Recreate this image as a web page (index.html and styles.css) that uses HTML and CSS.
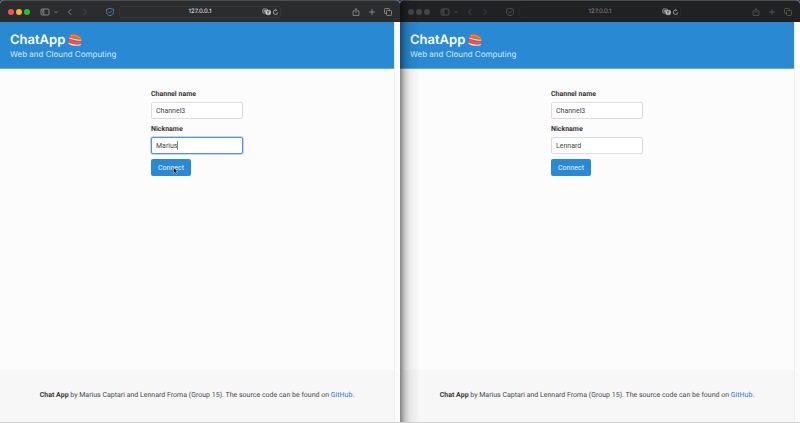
FILE: index.html
```html
<!DOCTYPE html>
<html lang="en">
<head>
<meta charset="utf-8">
<title>ChatApp</title>
<link rel="stylesheet" href="styles.css">
</head>
<body>
<svg class="sprite" aria-hidden="true">
  <symbol id="sidebar" viewBox="0 0 10 8"><rect x="1" y="1" width="8" height="6" rx="1"/><path d="M3.8 1v6M1.9 2.5h1M1.9 3.7h1M1.9 4.9h1"/></symbol>
  <symbol id="down" viewBox="0 0 4 8"><path d="M.5 3.4 2 4.8l1.5-1.4"/></symbol>
  <symbol id="back" viewBox="0 0 6 8"><path d="M4.2 1.2 1.5 4l2.7 2.8"/></symbol>
  <symbol id="forward" viewBox="0 0 6 8"><path d="M1.8 1.2 4.5 4 1.8 6.8"/></symbol>
  <symbol id="shield" viewBox="0 0 8 8"><path d="M4 .4 7.6 1.4v2.7C7.6 6 5.8 7.1 4 7.7 2.2 7.1.4 6 .4 4.1V1.4zM2.4 3.8l1.2 1.2 2.1-2.3"/></symbol>
  <symbol id="translate" viewBox="0 0 9 8"><rect x=".8" y="1" width="4.6" height="4" rx=".8"/><path d="M2 3.8 3.1 2l1 1.8M2.4 3.2h1.4"/><rect class="solid" x="4" y="2.4" width="4.4" height="4.2" rx=".8"/><path class="glyph" d="M5 3.6h2.4M6.2 3v.6M7 3.7C6.8 4.8 6 5.2 5.2 5.5M5.4 4.2c.5.8 1 1.1 1.8 1.3"/></symbol>
  <symbol id="reload" viewBox="0 0 7 8"><path d="M5.7 4.3A2.2 2.2 0 1 1 3.8 2.1M3.4 1l1.3 1.1-1.2 1.2"/></symbol>
  <symbol id="share" viewBox="0 0 8 8"><path d="M2.8 2.8H1.1v4.6h5.8V2.8H5.2M4 5V.6M2.6 1.9 4 .6l1.4 1.3"/></symbol>
  <symbol id="plus" viewBox="0 0 8 8"><path d="M4 1v6M1 4h6"/></symbol>
  <symbol id="tabs" viewBox="0 0 8 8"><rect x="2.5" y="2.5" width="5" height="5" rx=".8"/><path d="M2.3 5.5h-1a.8.8 0 0 1-.8-.8V1.3A.8.8 0 0 1 1.3.5h3.4a.8.8 0 0 1 .8.8v1"/></symbol>
  <symbol id="food" viewBox="0 0 14 12">
    <path fill="#eedfd8" d="M.2 8.6C4 10.2 9 11 13.2 10l-.9 1.5C8.5 12.2 3.5 11.8.7 10z"/>
    <path fill="#f04540" d="M.9 5.6C2 4.8 3.4 5.1 4.7 5.8 7.5 7.2 10.5 7.4 13.8 6.9L13 10C9.5 10.8 4.3 10.2.1 8.6z"/>
    <path fill="none" stroke="#ff8574" stroke-width=".4" d="M1.4 7c3.7 1.8 7.8 2 11.6 1.2"/>
    <path fill="#ecd5ca" d="M1.2 3.6C5 4.1 8.5 5.8 13 5.3l.6 1.3C9.5 7.3 5 6 1 4.5z"/>
    <path fill="#e96831" d="M2.5.6C5.8-.1 10.8.6 12.9 3.6l.2 1.8C8.8 5.9 5.1 3.9 1.2 3.7z"/>
    <path fill="none" stroke="#ffa566" stroke-width=".5" d="M2.8 1.6c3-.4 6 .4 9.2 2.1"/>
  </symbol>
</svg>

<section class="window" aria-label="Marius">
  <div class="toolbar">
    <div class="tools">
      <div class="lights"><i class="close"></i><i class="minimize"></i><i class="expand"></i></div>
      <div class="panel">
        <button aria-label="Sidebar"><svg class="w10"><use href="#sidebar"/></svg></button>
        <button aria-label="Tab groups"><svg class="w4"><use href="#down"/></svg></button>
      </div>
      <div class="history">
        <button aria-label="Back"><svg class="w6"><use href="#back"/></svg></button>
        <button class="disabled" aria-label="Forward"><svg class="w6"><use href="#forward"/></svg></button>
      </div>
      <button class="shield" aria-label="Privacy"><svg class="w8"><use href="#shield"/></svg></button>
    </div>
    <div class="address">
      <span class="host">127.0.0.1</span>
      <button class="lit" aria-label="Translate"><svg class="w9"><use href="#translate"/></svg></button>
      <button class="lit" aria-label="Reload"><svg class="w7"><use href="#reload"/></svg></button>
    </div>
    <div class="actions">
      <button aria-label="Share"><svg class="w8"><use href="#share"/></svg></button>
      <button aria-label="New tab"><svg class="w8"><use href="#plus"/></svg></button>
      <button aria-label="Tab overview"><svg class="w8"><use href="#tabs"/></svg></button>
    </div>
  </div>
  <div class="page">
    <header class="hero">
      <h1>ChatApp <svg class="food" aria-hidden="true"><use href="#food"/></svg></h1>
      <p>Web and Clound Computing</p>
    </header>
    <main>
      <form>
        <label for="channel-1">Channel name</label>
        <div class="control"><input id="channel-1" type="text" value="Channel3"></div>
        <label for="nick-1">Nickname</label>
        <div class="control"><input id="nick-1" class="focused" type="text" value="Marius"><span class="caret"></span></div>
        <button class="connect" type="button">Connect</button>
        <svg class="pointer" viewBox="0 0 6 8" aria-hidden="true"><path d="M.5.4v5.8l1.4-1.2 1 2.4 1.2-.5-1-2.3h1.8z"/></svg>
      </form>
    </main>
    <footer><p><strong>Chat App</strong> by Marius Captari and Lennard Froma (Group 15). The source code can be found on <a href="#">GitHub</a>.</p></footer>
  </div>
</section>

<section class="window inactive" aria-label="Lennard">
  <div class="toolbar">
    <div class="tools">
      <div class="lights"><i class="close"></i><i class="minimize"></i><i class="expand"></i></div>
      <div class="panel">
        <button aria-label="Sidebar"><svg class="w10"><use href="#sidebar"/></svg></button>
        <button aria-label="Tab groups"><svg class="w4"><use href="#down"/></svg></button>
      </div>
      <div class="history">
        <button aria-label="Back"><svg class="w6"><use href="#back"/></svg></button>
        <button class="disabled" aria-label="Forward"><svg class="w6"><use href="#forward"/></svg></button>
      </div>
      <button class="shield" aria-label="Privacy"><svg class="w8"><use href="#shield"/></svg></button>
    </div>
    <div class="address">
      <span class="host">127.0.0.1</span>
      <button class="lit" aria-label="Translate"><svg class="w9"><use href="#translate"/></svg></button>
      <button class="lit" aria-label="Reload"><svg class="w7"><use href="#reload"/></svg></button>
    </div>
    <div class="actions">
      <button aria-label="Share"><svg class="w8"><use href="#share"/></svg></button>
      <button aria-label="New tab"><svg class="w8"><use href="#plus"/></svg></button>
      <button aria-label="Tab overview"><svg class="w8"><use href="#tabs"/></svg></button>
    </div>
  </div>
  <div class="page">
    <header class="hero">
      <h1>ChatApp <svg class="food" aria-hidden="true"><use href="#food"/></svg></h1>
      <p>Web and Clound Computing</p>
    </header>
    <main>
      <form>
        <label for="channel-2">Channel name</label>
        <div class="control"><input id="channel-2" type="text" value="Channel3"></div>
        <label for="nick-2">Nickname</label>
        <div class="control"><input id="nick-2" type="text" value="Lennard"></div>
        <button class="connect" type="button">Connect</button>
      </form>
    </main>
    <footer><p><strong>Chat App</strong> by Marius Captari and Lennard Froma (Group 15). The source code can be found on <a href="#">GitHub</a>.</p></footer>
  </div>
</section>
</body>
</html>
```

FILE: styles.css
```css
* { box-sizing: border-box; }

body {
  display: grid;
  grid-template-columns: 1fr 1fr;
  min-height: 100vh;
  margin: 0;
  background: #173153;
  color: #4a4a4a;
  font: 7px/10px Roboto, "Liberation Sans", sans-serif;
  text-rendering: geometricPrecision;
}

h1, p { margin: 0; }
button { margin: 0; padding: 0; border: 0; background: none; color: inherit; font: inherit; }
.sprite { position: absolute; width: 0; height: 0; }

.window {
  position: relative;
  display: flex;
  flex-direction: column;
  border-radius: 4px 4px 0 0;
  border-bottom: 1px solid #d0d0d0;
  background: #fcfcfc;
  overflow: hidden;
}

.toolbar {
  display: grid;
  grid-template-columns: 1fr 162px 1fr;
  align-items: center;
  height: 22px;
  border-top: 1px solid #4b4d4e;
  border-radius: 4px 4px 0 0;
  background: #2b2c2e;
  color: #a5a6a7;
}
.toolbar svg { display: block; height: 8px; fill: none; stroke: currentColor; stroke-width: .7; }
.w4 { width: 4px; }
.w6 { width: 6px; }
.w7 { width: 7px; }
.w8 { width: 8px; }
.w9 { width: 9px; }
.w10 { width: 10px; }
.solid { fill: currentColor; }
.glyph { stroke: #2b2c2e; stroke-width: .5; }

.tools, .lights, .panel, .history, .actions, .address { display: flex; align-items: center; }
.tools { justify-content: space-between; padding: 0 5px 0 8px; }
.lights { gap: 2px; }
.lights i { width: 6px; height: 6px; border-radius: 50%; }
.close { background: #f4534e; }
.minimize { background: #f6b52e; }
.expand { background: #27c138; }
.panel { gap: 4px; }
.history { gap: 9px; }
.disabled { color: #55575a; }
.shield { margin-left: 8px; color: #4aa3e0; }
.address {
  position: relative;
  justify-content: flex-end;
  gap: 1px;
  height: 12px;
  padding-right: 1px;
  border: 1px solid #343638;
  border-radius: 3px;
}
.host { position: absolute; inset: 0; color: #f0f0f0; font-family: Inter, sans-serif; font-size: 6px; text-align: center; }
.lit { color: #d0d0d0; }
.actions { justify-content: flex-end; gap: 8px; padding-right: 8px; }

.page {
  display: flex;
  flex: 1;
  flex-direction: column;
  margin-right: 6px;
  box-shadow: 1px 0 #ededed;
}
.hero { padding: 10px 10px 8px; border-bottom: 1px solid #63acdf; background: #2989d3; color: #d5e8f6; font-family: Inter, "Liberation Sans", sans-serif; }
.hero h1 { display: flex; align-items: center; gap: 3px; color: #fff; font-size: 13px; font-weight: 600; line-height: 16px; }
.hero p { font-size: 8px; line-height: 12px; }
.food { width: 14px; height: 12px; }

main { flex: 1; padding-top: 20px; }
form { position: relative; display: flex; flex-direction: column; align-items: flex-start; width: 92px; margin: 0 auto; }
label { margin-bottom: 3px; color: #363636; font-weight: 700; }
strong { color: #363636; }
.control { position: relative; width: 100%; margin-bottom: 5px; }
input {
  display: block;
  width: 100%;
  height: 17px;
  padding: 0 4px;
  border: 1px solid #dbdbdb;
  border-radius: 2px;
  background: #fff;
  color: #444;
  font: inherit;
}
.focused { border-color: #5c8ede; box-shadow: 0 0 0 1px #c3d5f4; }
.caret { position: absolute; top: 4px; left: 26px; width: 1px; height: 9px; background: #888; }
.connect { height: 17px; padding: 0 7px; border-radius: 2px; background: #2989d3; color: #e8f4fc; }
.pointer { position: absolute; bottom: 1px; left: 22px; width: 6px; height: 8px; fill: #111; stroke: #fff; stroke-width: .4; }

footer { padding: 20px 10px 22px; background: #f7f7f7; text-align: center; }
a { color: #3273dc; text-decoration: none; }

.inactive .toolbar { background: #202122; color: #606264; }
.inactive .lights i { background: #444648; }
.inactive .shield { color: #606264; }
.inactive .disabled { color: #4b4d4f; }
.inactive .lit { color: #c0c0c0; }
.inactive .address { border-color: #28292b; }
.inactive .host { color: #919293; }
.inactive::before {
  content: "";
  position: absolute;
  inset: 0 auto 0 0;
  width: 20px;
  background: linear-gradient(90deg, #0007, #0003 25%, #0001 50%, #0000);
  pointer-events: none;
}
```
